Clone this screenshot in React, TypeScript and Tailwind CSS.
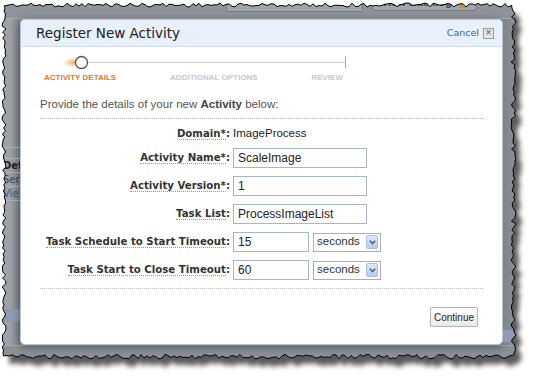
import type { FC, ReactNode } from 'react';

const W = 535;
const H = 377;

// cheap deterministic noise for the torn paper edge
const noise = (i: number) => {
  const v = Math.sin(i * 12.9898 + 78.233) * 43758.5453;
  return v - Math.floor(v);
};

const tornPoints: [number, number][] = (() => {
  const pts: [number, number][] = [];
  let k = 1;
  for (let x = 4; x < 513; x += 3) pts.push([x, 5 + noise(k++) * 4 - 2]);
  for (let y = 5; y < 356; y += 3) pts.push([513 + noise(k++) * 5 - 2, y]);
  for (let x = 513; x > 4; x -= 3) pts.push([x, 356 + noise(k++) * 5 - 2]);
  for (let y = 356; y > 5; y -= 3) pts.push([4 + noise(k++) * 4 - 2, y]);
  return pts;
})();

const TornEdge: FC = () => {
  const poly = tornPoints.map(([x, y]) => `${x.toFixed(1)},${y.toFixed(1)}`).join(' ');
  const d = `M0 0H${W}V${H}H0Z M${tornPoints.map(([x, y]) => `${x.toFixed(1)} ${y.toFixed(1)}`).join(' L')}Z`;
  return (
    <svg className="pointer-events-none absolute inset-0" width={W} height={H}>
      <defs>
        <filter id="torn-blur" x="-10%" y="-10%" width="120%" height="120%">
          <feGaussianBlur stdDeviation="2.5" />
        </filter>
        <mask id="torn-outside">
          <rect width={W} height={H} fill="#fff" />
          <polygon points={poly} fill="#000" />
        </mask>
      </defs>
      <path d={d} fill="#fff" fillRule="evenodd" />
      <g mask="url(#torn-outside)">
        <polygon points={poly} fill="#333" opacity="0.8" transform="translate(6 8)" filter="url(#torn-blur)" />
      </g>
      <polygon points={poly} fill="none" stroke="#000" strokeWidth="1" />
    </svg>
  );
};

const Stepper: FC = () => (
  <div className="ml-[4px] mt-[8px] w-[302px]">
    <svg width="302" height="14" viewBox="0 0 302 14" className="block">
      <defs>
        <linearGradient id="trail" x1="0" x2="1" y1="0" y2="0">
          <stop offset="0" stopColor="#f08a2c" stopOpacity="0.25" />
          <stop offset="1" stopColor="#f08a2c" stopOpacity="1" />
        </linearGradient>
        <radialGradient id="glow" cx="0.6" cy="0.5" r="0.5">
          <stop offset="0" stopColor="#f5a04a" stopOpacity="0.9" />
          <stop offset="1" stopColor="#f5a04a" stopOpacity="0" />
        </radialGradient>
      </defs>
      <line x1="0" y1="7.5" x2="32" y2="7.5" stroke="url(#trail)" strokeWidth="1.2" />
      <ellipse cx="28" cy="7.5" rx="11" ry="5" fill="url(#glow)" />
      <line x1="44" y1="7.5" x2="301" y2="7.5" stroke="#cfcfcf" strokeWidth="1" />
      <line x1="301.5" y1="1" x2="301.5" y2="13" stroke="#a8a8a8" strokeWidth="1" />
      <circle cx="37.5" cy="7.5" r="6" fill="#fff" stroke="#555" strokeWidth="1.3" />
    </svg>
    <div className="mt-[4px] flex justify-between pr-[3px] text-[8px] font-bold leading-[10px]">
      <span className="text-[#e8781e]">ACTIVITY DETAILS</span>
      <span className="text-[#c9c9c9]">ADDITIONAL OPTIONS</span>
      <span className="text-[#c9c9c9]">REVIEW</span>
    </div>
  </div>
);

const Row: FC<{ label: string; suffix: string; children: ReactNode; tall?: boolean }> = ({ label, suffix, children, tall = true }) => (
  <div className={tall ? 'flex h-[20px] items-center' : 'flex h-[18px] items-center'}>
    <div className="w-[190px] text-right font-['DejaVu_Sans',sans-serif] text-[10.2px] font-bold text-[#333]">
      <span className="border-b border-dotted border-[#999]">{label}</span>
      {suffix}
    </div>
    <div className="ml-[3px] flex items-center gap-[4px]">{children}</div>
  </div>
);

const TextInput: FC<{ value: string; width: string }> = ({ value, width }) => (
  <input
    defaultValue={value}
    className={`${width} h-[20px] border border-[#a3b6ce] bg-white px-[4px] text-[12px] text-[#222] outline-none`}
  />
);

const Seconds: FC = () => (
  <div className="flex h-[19px] w-[68px] items-center justify-between border border-[#a9afb8] bg-white pl-[3px] pr-[2px] text-[11.5px] text-[#333]">
    <span>seconds</span>
    <span className="flex h-[14px] w-[12px] items-center justify-center rounded-[2px] border border-[#a8bde6] bg-gradient-to-b from-[#dfe9fb] to-[#b6cbf1]">
      <svg width="7" height="5" viewBox="0 0 7 5">
        <path d="M0.8 0.8L3.5 3.6L6.2 0.8" fill="none" stroke="#4a5f8c" strokeWidth="1.5" />
      </svg>
    </span>
  </div>
);

const Modal: FC = () => (
  <div className="flex w-[483px] flex-col overflow-hidden rounded-[5px] border border-[#b7c5d8] bg-white shadow-[0_2px_8px_rgba(0,0,0,0.45)]">
    <div className="flex h-[27px] shrink-0 items-center justify-between border-b border-[#d3deed] bg-[#e8f0fb] pl-[15px] pr-[8px]">
      <span className="font-['DejaVu_Sans',sans-serif] text-[13.5px] text-[#222]">Register New Activity</span>
      <div className="flex items-center gap-[4px]">
        <span className="font-['DejaVu_Sans',sans-serif] text-[9.5px] text-[#2f68a5]">Cancel</span>
        <span className="flex h-[11px] w-[11px] items-center justify-center border border-[#9a9a9a] bg-[#e6e6e6] text-[10px] leading-none text-[#555]">
          ×
        </span>
      </div>
    </div>
    <div className="flex flex-1 flex-col px-[19px]">
      <Stepper />
      <p className="mt-[14px] text-[11.5px] leading-[14px] text-[#555]">
        Provide the details of your new <b className="text-[#444]">Activity</b> below:
      </p>
      <div className="mt-[7px] border-t border-dotted border-[#bbb]" />
      <div className="mt-[6px] flex flex-col gap-[8px]">
        <div className="-mb-[3px]">
          <Row label="Domain*" suffix=":" tall={false}>
            <span className="text-[11.5px] text-[#222]">ImageProcess</span>
          </Row>
        </div>
        <Row label="Activity Name*" suffix=":">
          <TextInput value="ScaleImage" width="w-[134px]" />
        </Row>
        <Row label="Activity Version*" suffix=":">
          <TextInput value="1" width="w-[134px]" />
        </Row>
        <Row label="Task List" suffix=":">
          <TextInput value="ProcessImageList" width="w-[134px]" />
        </Row>
        <Row label="Task Schedule to Start Timeout" suffix=":">
          <TextInput value="15" width="w-[76px]" />
          <Seconds />
        </Row>
        <Row label="Task Start to Close Timeout" suffix=":">
          <TextInput value="60" width="w-[76px]" />
          <Seconds />
        </Row>
      </div>
      <div className="mt-[8px] border-t border-dotted border-[#bbb]" />
      <div className="mt-[18px] flex justify-end pr-[5px]">
        <button className="h-[20px] w-[48px] rounded-[2px] border border-[#b5b5b5] bg-gradient-to-b from-white to-[#e9e9e9] text-[10px] text-[#222]">
          Continue
        </button>
      </div>
    </div>
  </div>
);

export default function App() {
  return (
    <div className="relative h-[377px] w-[535px] overflow-hidden bg-[#999ea5] font-['Liberation_Sans',Arial,sans-serif]">
      {/* dimmed page behind the dialog */}
      <div className="flex h-[19px] border-b border-[#a7abb1] bg-[#8f949b]">
        <div className="ml-[226px] h-[12px] w-[137px] border border-[#767b82] bg-[#a0a5ab]" />
        <div className="ml-[9px] flex h-[11px] w-[105px] items-end justify-between rounded-b-[3px] border border-[#767b82] bg-[#a3a7ad] px-[8px]">
          <span className="mb-[3px] text-[11px] font-bold leading-[9px] text-[#2b4a78]">View Backlog</span>
          <span className="mb-[2px] h-[8px] w-[9px] bg-[#c7902d]" />
        </div>
      </div>
      <div className="flex h-[326px]">
        <div className="flex w-[20px] flex-col bg-gradient-to-r from-[#a1a5ab] via-[#9ea2a8] to-[#7e838a] font-['DejaVu_Sans',sans-serif] text-[10px]">
          <div className="h-[129px] border-b border-[#b0b4b9]" />
          <div className="h-[11px] border-b border-[#b0b4b9]" />
          <div className="h-[14px] border-b border-[#b0b4b9] pl-[3px] font-bold leading-[14px] text-[#222]">Det</div>
          <div className="h-[14px] border-b border-[#b0b4b9] pl-[3px] leading-[14px] text-[#444]">Ser</div>
          <div className="h-[14px] border-b border-[#b0b4b9] pl-[3px] leading-[14px] text-[#3a5b93]">Vie</div>
          <div className="h-[108px]" />
          <div className="h-[12px] bg-[#8f9db3]" />
        </div>
        <Modal />
        <div className="flex flex-1 flex-col bg-gradient-to-r from-[#7f848b] to-[#9ca0a6]">
          <div className="h-[311px]" />
          <div className="h-[12px] bg-[#8f9db3]" />
        </div>
      </div>
      <div className="h-[32px] border-t border-[#a6aab0] bg-[#8c9197]" />
      <TornEdge />
    </div>
  );
}
